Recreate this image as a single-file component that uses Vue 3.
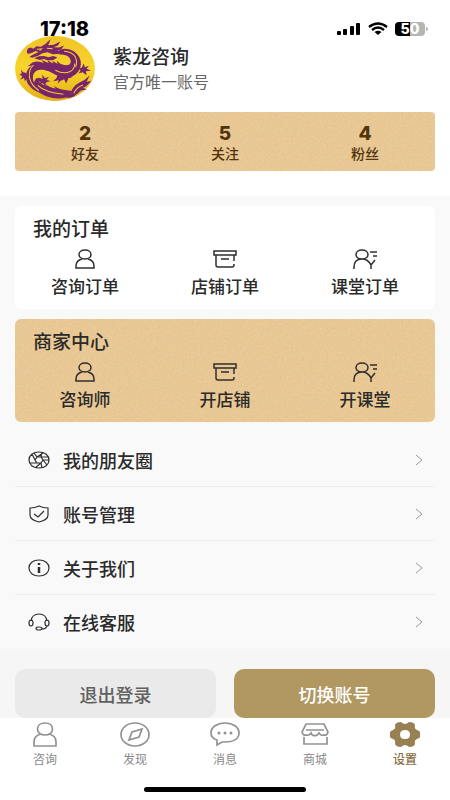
<template>
  <div class="page">
    <header class="top">
      <div class="status">
        <span class="time">17:18</span>
        <div class="signals">
          <svg width="24" height="14" viewBox="0 0 24 14">
            <rect x="0" y="9" width="4" height="4" rx="1" />
            <rect x="6" y="7" width="4" height="6" rx="1" />
            <rect x="13" y="4" width="4" height="9" rx="1" />
            <rect x="19" y="1" width="4" height="12" rx="1" />
          </svg>
          <svg width="20" height="14" viewBox="0 0 20 14">
            <path d="M1 5Q10-2 19 5M4 8Q10 3 16 8" fill="none" stroke="#000" stroke-width="2.3" />
            <path d="M6.5 10Q10 7.5 13.5 10L10 13Z" />
          </svg>
          <div class="battery"><span>50</span></div>
        </div>
      </div>
      <div class="profile">
        <svg class="avatar" viewBox="15 18 238 192" preserveAspectRatio="none">
          <defs>
            <linearGradient id="gold" x1="0" y1="0" x2="0" y2="1">
              <stop offset="0" stop-color="#f0c424" />
              <stop offset=".5" stop-color="#f7d52c" />
              <stop offset="1" stop-color="#e5ae16" />
            </linearGradient>
          </defs>
          <ellipse cx="134" cy="114" rx="119" ry="96" fill="url(#gold)" />
          <g fill="#792569">
            <!-- head and horns -->
            <path d="M50 64L53 55L62 52L69 56L79 48L92 50L104 42L118 36L113 45L130 44L150 34L143 46L130 51L146 52L161 46L153 57L141 61L156 65L144 71L127 72L112 66L97 69L84 76L66 82L58 79L70 73L85 65L77 62L64 68L53 71Z" />
            <path d="M72 84L86 78L101 77L115 81L128 77L141 81L130 89L113 90L101 86L89 89Z" />
            <path d="M106 41L121 27L116 40Z" />
            <!-- back arc -->
            <path d="M146 59Q171 51 191 64Q212 79 211 102Q208 129 181 139Q156 145 134 132Q118 122 99 118Q78 115 70 130Q64 146 77 164Q90 180 112 188Q86 189 66 174Q44 155 48 132Q51 113 66 105L53 107L67 96Q85 90 101 98L93 88L115 98L112 90L129 99L126 91L142 101L139 91L151 101Q166 107 177 102Q185 94 177 82Q167 72 147 73Z" />
            <!-- belly and tail -->
            <path d="M79 142Q86 160 108 165L103 158Q119 171 136 173L131 166Q150 179 171 178L187 181L180 188L196 191Q190 202 167 200Q140 207 110 197Q84 188 72 169Q68 154 79 142Z" />
            <path d="M181 184Q187 166 207 155Q224 149 237 135L228 154L242 150Q232 165 217 171L229 176L211 179L199 190L185 194Z" />
            <!-- claws -->
            <path d="M48 127L39 125L33 117L35 129L28 132L37 137L31 147L42 141L44 152L52 140ZM79 143L90 142L97 145L96 132L104 143L116 138L109 148L121 151L107 155L105 166L97 157L87 163L91 153L79 153ZM140 134L158 138L176 133L187 139L174 143L167 158L161 146L150 151L142 159L145 149L128 152L139 142ZM202 112L214 112L219 99L223 110L235 106L228 115L241 121L226 122L228 134L216 125L204 129L210 119Z" />
          </g>
          <g fill="none" stroke="#f3cf2a" stroke-width="3">
            <path d="M80 57L94 56L88 61M110 54L127 56M161 63Q184 64 194 79Q202 94 195 110M70 104Q55 116 58 140Q62 163 86 179M83 164Q104 185 159 190M135 119Q160 132 179 123Q192 116 193 99M190 187Q198 170 217 163" />
          </g>
        </svg>
        <div>
          <h1>紫龙咨询</h1>
          <p>官方唯一账号</p>
        </div>
      </div>
      <div class="stats paper">
        <button v-for="s in stats" :key="s.label">
          <strong>{{ s.count }}</strong>
          <span>{{ s.label }}</span>
        </button>
      </div>
    </header>

    <main>
      <section v-for="card in cards" :key="card.title" class="card" :class="{ paper: card.gold }">
        <h2>{{ card.title }}</h2>
        <div class="grid">
          <button v-for="(label, i) in card.items" :key="label">
            <svg width="26" height="22" viewBox="0 0 26 22">
              <path :d="cardIcons[i]" />
            </svg>
            <span>{{ label }}</span>
          </button>
        </div>
      </section>

      <nav class="menu">
        <a v-for="m in menu" :key="m.label" href="#">
          <svg class="lead" width="22" height="18" viewBox="0 0 22 18">
            <path :d="m.icon" />
            <path v-if="m.bold" :d="m.bold" class="bold" />
          </svg>
          <span>{{ m.label }}</span>
          <svg class="arrow" width="8" height="12" viewBox="0 0 8 12"><path d="M1 1L7 6L1 11" /></svg>
        </a>
      </nav>
    </main>

    <div class="actions">
      <button class="logout">退出登录</button>
      <button class="switch">切换账号</button>
    </div>

    <footer>
      <nav class="tabs">
        <button v-for="t in tabs" :key="t.label" :class="{ active: active === t.label }" @click="active = t.label">
          <svg width="32" height="26" viewBox="0 0 32 26">
            <path :d="t.icon" :class="{ solid: t.solid }" fill-rule="evenodd" />
            <path v-if="t.dots" :d="t.dots" class="dots" />
          </svg>
          <span>{{ t.label }}</span>
        </button>
      </nav>
      <div class="home"></div>
    </footer>
  </div>
</template>

<script setup>
import { ref } from 'vue'

const active = ref('设置')

const stats = [
  { count: 2, label: '好友' },
  { count: 5, label: '关注' },
  { count: 4, label: '粉丝' }
]

const cards = [
  { title: '我的订单', gold: false, items: ['咨询订单', '店铺订单', '课堂订单'] },
  { title: '商家中心', gold: true, items: ['咨询师', '开店铺', '开课堂'] }
]

// person, shop box, teacher
const cardIcons = [
  'M13 2C9.500 2 7 4 7 6.500S9.500 11 13 11S19 9 19 6.500S16.500 2 13 2M10 11C6 12 4 15 4 18V20H22V18C22 15 20 12 16 11',
  'M2 3H24V7H2ZM4 7V17Q4 19 6 19H20Q22 19 22 17V16M22 7V13M9 11H17',
  'M10 2C6.500 2 4 4 4 6.500S6.500 11 10 11S16 9 16 6.500S13.500 2 10 2M2 21V19Q2 11 10 11Q16 11 19 17V21M19 17L23 12M18 4H25M21 8H25'
]

const menu = [
  {
    label: '我的朋友圈',
    icon: 'M11 1C5 1 1 4.500 1 9S5 17 11 17S21 13.500 21 9S17 1 11 1M9 6H13L15 9L13 12H9L7 9ZM9 6L15 2M13 6L20 6M15 9L19 14M13 12L8 16M9 12L2 12M7 9L4 3M9 6L6 2M13 6L14 1M15 9L21 9M13 12L14 17'
  },
  {
    label: '账号管理',
    icon: 'M2 3Q7 3 11 1Q15 3 20 3V10Q20 15 11 17Q2 15 2 10ZM6 9L10 12L16 6'
  },
  {
    label: '关于我们',
    icon: 'M11 1C5 1 1 4.500 1 9S5 17 11 17S21 13.500 21 9S17 1 11 1',
    bold: 'M11 4V6M11 8V14'
  },
  {
    label: '在线客服',
    icon: 'M3 8Q4 1 11 1Q18 1 19 8M3 7Q1 7 1 10T3 13Q5 13 5 10T3 7M19 7Q17 7 17 10T19 13Q21 13 21 10T19 7M19 13Q18 16 14 16M11 14Q8 14 8 15.500T11 17Q14 17 14 15.500T11 14'
  }
]

const tabs = [
  {
    label: '咨询',
    icon: 'M16 2C11.500 2 8.500 4.500 8.500 8S11.500 14 16 14S23.500 11.500 23.500 8S20.500 2 16 2M12 13C7 14 5 17 5 21V25H27V21C27 17 25 14 20 13'
  },
  {
    label: '发现',
    icon: 'M16 2C8 2 2 7 2 13.500S8 25 16 25S30 20 30 13.500S24 2 16 2M23 8L13 11L10 19L20 16Z'
  },
  {
    label: '消息',
    icon: 'M16 2C8 2 2 6 2 12Q2 17 8 19V24L13 21H16C24 21 30 18 30 12S24 2 16 2',
    dots: 'M10 12H10M16 12H16M22 12H22'
  },
  {
    label: '商城',
    icon: 'M7 3H25L29 11Q28 15 24.500 14Q22 15 20 12Q18 15 16 14.500Q13 15 12 12Q10 15 7.500 14Q4 15 3 11ZM7 9H25M5 16V23H28V16'
  },
  {
    label: '设置',
    solid: true,
    icon: 'M12 1Q14 3 16 3T20 1Q25 1 26 4Q25 8 28 9Q32 10 31 13.500Q32 17 28 18Q25 19 26 23Q25 26 20 26Q18 24 16 24T12 26Q7 26 6 23Q7 19 4 18Q0 17 1 13.500Q0 10 4 9Q7 8 6 4Q7 1 12 1ZM16 9Q11 9 11 13.500T16 18Q21 18 21 13.500T16 9Z'
  }
]
</script>

<style>
body {
  margin: 0;
  background: #fff;
}
</style>

<style scoped>
.page {
  min-height: 100vh;
  display: flex;
  flex-direction: column;
  font-family: 'Noto Sans CJK SC', sans-serif;
  font-weight: 500;
  color: #2a2a2a;
  background: #f9f9f9;
}

button {
  border: none;
  padding: 0;
  background: none;
  color: inherit;
  font: inherit;
  cursor: pointer;
}

h1,
h2,
p {
  margin: 0;
}

.top {
  padding: 0 15px 25px;
  background: #fff;
}

.status {
  height: 36px;
  padding: 0 10px 0 25px;
  display: flex;
  justify-content: space-between;
}

.time {
  padding-top: 19px;
  font: 800 20px/20px Inter, sans-serif;
  color: #000;
}

.signals {
  display: flex;
  gap: 7px;
  padding-top: 22px;
}

.battery {
  position: relative;
  width: 30px;
  height: 14px;
  border-radius: 4px;
  background: linear-gradient(90deg, #000 50%, #b5b5b5 50%);
  color: #fff;
  font: 800 14px/14px Inter, sans-serif;
  text-align: center;
}

.battery::after {
  content: '';
  position: absolute;
  right: -3px;
  top: 5px;
  width: 2px;
  height: 4px;
  border-radius: 0 2px 2px 0;
  background: #b5b5b5;
}

.profile {
  display: flex;
  gap: 18px;
}

.avatar {
  width: 80px;
  height: 65px;
}

h1 {
  margin-top: 6px;
  font-size: 19px;
  line-height: 28px;
  font-weight: 500;
}

.profile p {
  font-size: 16px;
  line-height: 22px;
  font-weight: 400;
  color: #666;
}

.paper {
  background-color: #e8c793;
  background-image: url("data:image/svg+xml,%3Csvg xmlns='http://www.w3.org/2000/svg' width='210' height='210'%3E%3Cfilter id='n' x='0' y='0' width='100%25' height='100%25'%3E%3CfeTurbulence type='fractalNoise' baseFrequency='.45' numOctaves='3' stitchTiles='stitch'/%3E%3CfeColorMatrix values='.12 0 0 0 .825 0 .12 0 0 .695 0 0 .12 0 .495 0 0 0 0 1' color-interpolation-filters='sRGB'/%3E%3C/filter%3E%3Crect width='210' height='210' filter='url(%23n)'/%3E%3C/svg%3E");
}

.stats {
  display: grid;
  grid-template-columns: repeat(3, 1fr);
  margin-top: 11px;
  padding: 12px 0 9px;
  border-radius: 4px;
  color: #52350c;
}

.stats button {
  display: flex;
  flex-direction: column;
  align-items: center;
}

.stats strong {
  font: 800 19px/20px Inter, sans-serif;
}

.stats span {
  font-size: 14px;
  line-height: 18px;
}

main {
  padding: 10px 15px 0;
}

.card {
  padding: 10px 0 9px;
  border-radius: 6px;
  background-color: #fff;
  margin-bottom: 10px;
}

.card.paper {
  background-color: #e8c793;
}

h2 {
  padding: 0 18px;
  font-size: 19px;
  line-height: 24px;
  font-weight: 500;
}

.grid {
  display: grid;
  grid-template-columns: repeat(3, 1fr);
  padding-top: 8px;
}

.grid button {
  display: flex;
  flex-direction: column;
  align-items: center;
  gap: 3px;
  padding-bottom: 1px;
  font-size: 17px;
  line-height: 26px;
}

.grid path,
.lead path,
.arrow path {
  fill: none;
  stroke: #2f2f2f;
  stroke-width: 1.5;
}

.menu {
  padding-top: 1px;
}

.menu a {
  display: flex;
  align-items: center;
  height: 53px;
  padding: 0 12px 0 13px;
  border-bottom: 1px solid #eee;
  color: inherit;
  text-decoration: none;
  font-size: 18px;
}

.menu a:last-child {
  border-color: transparent;
}

.menu span {
  flex: 1;
  padding-left: 13px;
}

.lead path {
  stroke-width: 1.2;
}

.lead .bold {
  stroke-width: 2.5;
}

.arrow path {
  stroke: #999;
  stroke-width: 1;
}

.actions {
  display: grid;
  grid-template-columns: 1fr 1fr;
  gap: 18px;
  padding: 20px 15px 0;
  background: #f6f6f6;
}

.actions button {
  height: 49px;
  border-radius: 10px;
  font-size: 18px;
}

.logout {
  background: #eaeaea;
  color: #606060;
}

.actions .switch {
  background: #b19861;
  color: #fff;
}

footer {
  flex: 1;
  background: #fff;
}

.tabs {
  display: grid;
  grid-template-columns: repeat(5, 1fr);
  padding-top: 3px;
}

.tabs button {
  display: flex;
  flex-direction: column;
  align-items: center;
  gap: 3px;
  font-size: 12px;
  line-height: 18px;
  font-weight: 400;
  color: #888;
}

.tabs path {
  fill: none;
  stroke: #929292;
  stroke-width: 1.7;
}

.tabs .dots {
  stroke-width: 3;
  stroke-linecap: round;
}

.tabs .solid {
  fill: #998052;
  stroke: none;
}

.tabs .active {
  color: #8a7143;
  font-weight: 500;
}

.home {
  width: 36%;
  height: 5px;
  margin: 19px auto 8px;
  border-radius: 3px;
  background: #000;
}
</style>
